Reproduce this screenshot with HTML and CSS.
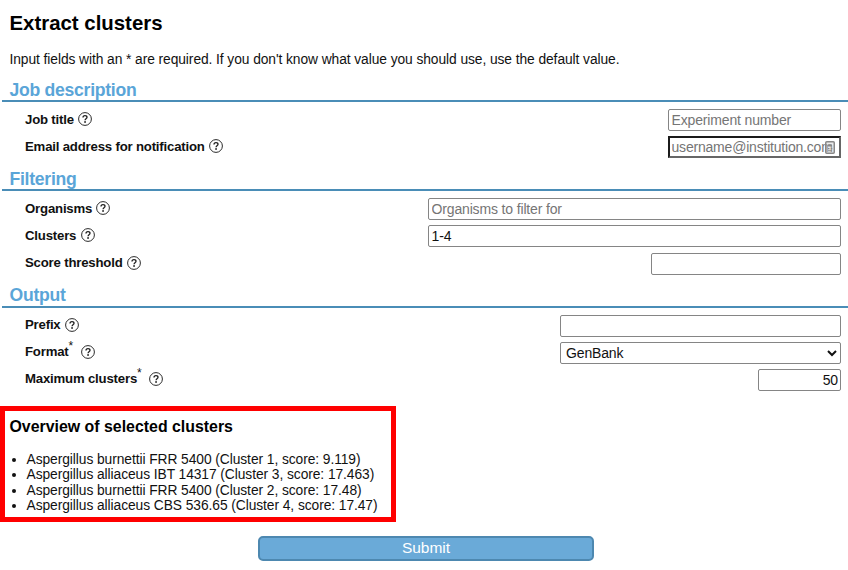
FILE: index.html
```html
<!DOCTYPE html>
<html lang="en">
<head>
<meta charset="utf-8">
<title>Extract clusters</title>
<link rel="stylesheet" href="styles.css">
</head>
<body>
<svg class="defs" aria-hidden="true">
  <symbol id="help" viewBox="0 0 14 14">
    <circle cx="7" cy="7" r="6.4" fill="none" stroke="#2a2a2a" stroke-width="1"/>
    <path d="M5 5.5C5 4.3 5.8 3.6 7 3.6s2 .7 2 1.7c0 1.5-1.9 1.5-1.9 2.9" fill="none" stroke="#222" stroke-width="1.35"/>
    <circle cx="7.05" cy="10" r=".9" fill="#222"/>
  </symbol>
</svg>
<form class="page">
  <h1 class="title">Extract clusters</h1>
  <p class="intro">Input fields with an * are required. If you don't know what value you should use, use the default value.</p>

  <section class="job">
    <h2 class="legend">Job description</h2>
    <div class="row"><label class="label">Job title</label><svg class="help"><use href="#help"/></svg><input class="field small" placeholder="Experiment number"></div>
    <div class="row"><label class="label">Email address for notification</label><svg class="help"><use href="#help"/></svg>
      <span class="email"><input class="field small invalid" placeholder="username@institution.com">
        <svg class="autofill" viewBox="0 0 10 13"><rect x=".75" y=".75" width="8.5" height="11.5" rx="1" fill="#ccc" fill-opacity=".4" stroke="#888" stroke-width="1.5"/><path d="M3 3.5h4v2H3zM3 7h1.5v1.3H3zM5.8 7h1.5v1.3H5.8zM3 9.3h4v1H3z" fill="#888"/></svg>
      </span></div>
  </section>

  <section class="filtering">
    <h2 class="legend">Filtering</h2>
    <div class="row"><label class="label">Organisms</label><svg class="help"><use href="#help"/></svg><input class="field large" placeholder="Organisms to filter for"></div>
    <div class="row"><label class="label">Clusters</label><svg class="help"><use href="#help"/></svg><input class="field large" value="1-4"></div>
    <div class="row"><label class="label">Score threshold</label><svg class="help"><use href="#help"/></svg><input class="field score"></div>
  </section>

  <section class="output">
    <h2 class="legend">Output</h2>
    <div class="row"><label class="label">Prefix</label><svg class="help"><use href="#help"/></svg><input class="field medium"></div>
    <div class="row"><label class="label">Format<sup>*</sup></label><svg class="help after-star"><use href="#help"/></svg><select class="field medium"><option>GenBank</option></select></div>
    <div class="row"><label class="label">Maximum clusters<sup>*</sup></label><svg class="help after-star"><use href="#help"/></svg><input class="field count" value="50"></div>
  </section>

  <section class="overview">
    <h3 class="overview-title">Overview of selected clusters</h3>
    <ul class="clusters">
      <li>Aspergillus burnettii FRR 5400 (Cluster 1, score: 9.119)</li>
      <li>Aspergillus alliaceus IBT 14317 (Cluster 3, score: 17.463)</li>
      <li>Aspergillus burnettii FRR 5400 (Cluster 2, score: 17.48)</li>
      <li>Aspergillus alliaceus CBS 536.65 (Cluster 4, score: 17.47)</li>
    </ul>
  </section>
  <button class="submit" type="button">Submit</button>
</form>
</body>
</html>
```
FILE: styles.css
```css
* { box-sizing: border-box; }
body {
  margin: 0;
  background: #fff;
  color: #111;
  font-family: "Liberation Sans", Arial, sans-serif;
  overflow: hidden;
}
.defs { display: none; }
.page { display: flex; flex-direction: column; height: 570px; }
.title { margin: 10px 0 0 9.5px; font-size: 20.4px; line-height: 26px; color: #000; }
.intro { margin: 15px 0 0 9.5px; font-size: 13.8px; letter-spacing: -0.075px; line-height: 18px; white-space: nowrap; }
.job { margin-top: 3.4px; }
.legend {
  height: 30px;
  margin: 0 0 4.3px 2px;
  padding-left: 7.5px;
  border-bottom: 2px solid #4a8db7;
  color: #5aa5d8;
  font-size: 17.6px;
  letter-spacing: -0.27px;
  line-height: 36px;
}
.row { display: flex; align-items: center; height: 27.2px; padding: 0 7px 0 25px; }
.label { position: relative; top: -1px; font-size: 13.2px; letter-spacing: -0.19px; font-weight: bold; white-space: nowrap; }
.label sup { font-size: 12px; font-weight: normal; line-height: 0; vertical-align: 6px; }
.help { width: 14px; height: 14px; margin: -2px 0 0 4.3px; flex: none; }
.after-star { margin-left: 7.5px; }
.field {
  height: 22px;
  margin: 0 0 0 auto;
  padding: 1px 2.5px;
  border: 1px solid #858585;
  border-radius: 2px;
  background: #fff;
  color: #111;
  font: 14px "Liberation Sans", Arial, sans-serif;
  letter-spacing: -0.15px;
}
.field::placeholder { color: #757575; opacity: 1; }
.small { width: 173px; }
.large { width: 413px; }
.score { width: 190px; }
.medium { width: 281px; }
.count { width: 83px; padding-right: 2px; text-align: right; }
.email { position: relative; display: flex; margin-left: auto; }
.invalid { padding: 0 1.5px; border: 2px solid #666; border-top-color: #1b1b1b; border-left-color: #1b1b1b; border-radius: 0; letter-spacing: -0.2px; }
.autofill { position: absolute; top: 5px; right: 6px; width: 10px; height: 13px; }
select.field { padding: 0 0 0 1px; }
.filtering .legend { margin-bottom: 4.5px; }
.output .legend { height: 30.6px; line-height: 37px; }
.overview { width: 396px; height: 116px; margin-top: 12.3px; border: 5px solid #f00; }
.overview-title { margin: 6px 0 0 4.5px; color: #000; font-size: 15.9px; line-height: 20px; }
.clusters { margin: 15px 0 0; padding-left: 21.5px; font-size: 13.8px; letter-spacing: -0.07px; line-height: 15.4px; white-space: nowrap; }
.submit {
  width: 336px;
  height: 25px;
  margin: 14px 0 0 258px;
  padding: 0 0 1px;
  border: 2px solid #4d88b0;
  border-radius: 5px;
  background: #6aaad8;
  color: #fff;
  font: 15.5px "Liberation Sans", Arial, sans-serif;
}
```
